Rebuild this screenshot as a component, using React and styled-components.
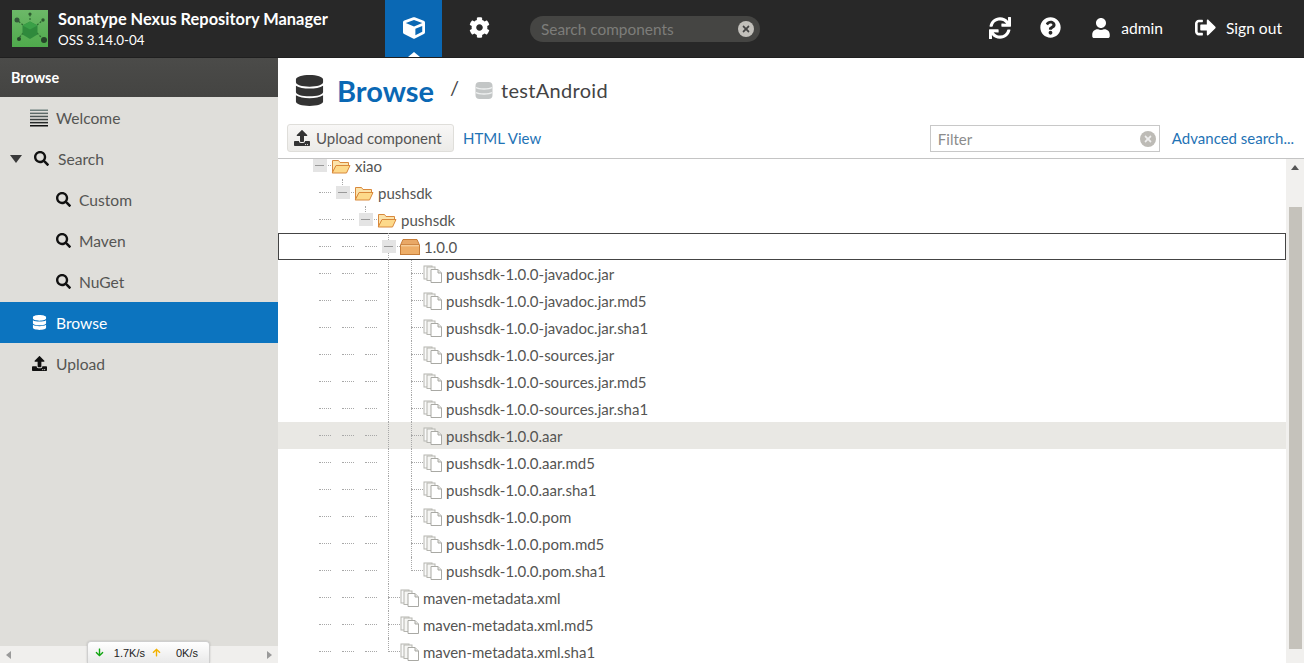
import React from "react";
import styled, { createGlobalStyle } from "styled-components";
import {
  FaCube,
  FaCog,
  FaDatabase,
  FaQuestionCircle,
  FaSearch,
  FaSignOutAlt,
  FaSync,
  FaTimes,
  FaUpload,
  FaUser,
  FaArrowDown,
  FaArrowUp,
} from "react-icons/fa";

const GlobalStyle = createGlobalStyle`
  html, body {
    margin: 0;
    padding: 0;
    height: 100%;
    overflow: hidden;
    background: #fff;
    font-family: "Lato", "Open Sans", sans-serif;
  }
  #root { height: 100%; }
  * { box-sizing: border-box; }
`;

const Page = styled.div`
  width: 1304px;
  height: 663px;
  display: grid;
  grid-template-rows: 58px 1fr;
  grid-template-columns: 278px 1fr;
  overflow: hidden;
`;

/* header */
const Header = styled.header`
  grid-column: 1 / 3;
  background: #282828;
  display: flex;
  align-items: stretch;
  color: #fff;
  border-bottom: 1px solid #1f1f1f;
`;

const Brand = styled.div`
  width: 385px;
  display: flex;
  align-items: center;
  padding-left: 12px;
  gap: 10px;
`;

const BrandText = styled.div`
  display: flex;
  flex-direction: column;
  gap: 3px;
`;

const BrandTitle = styled.div`
  font-size: 16.4px;
  font-weight: 700;
  line-height: 20px;
  white-space: nowrap;
`;

const BrandVersion = styled.div`
  font-size: 13.4px;
  line-height: 16px;
`;

const ModeTab = styled.div`
  position: relative;
  width: 57px;
  display: flex;
  align-items: center;
  justify-content: center;
  font-size: 22px;
  background: ${(props) => (props.active ? "#0a68b4" : "transparent")};
  padding-bottom: 2px;
  &:after {
    content: "";
    display: ${(props) => (props.active ? "block" : "none")};
    position: absolute;
    bottom: 0;
    left: 23px;
    border-left: 6px solid transparent;
    border-right: 6px solid transparent;
    border-bottom: 5px solid #fff;
  }
`;

const GearTab = styled(ModeTab)`
  margin-left: 9px;
  font-size: 21px;
`;

const SearchBox = styled.div`
  align-self: center;
  margin-left: 22px;
  width: 230px;
  height: 26px;
  border-radius: 13px;
  background: #454543;
  display: flex;
  align-items: center;
  justify-content: space-between;
  padding: 0 6px 0 11px;
  color: #7d7d7a;
  font-size: 15.4px;
`;

const ClearIcon = styled.span`
  width: ${(props) => props.size || 16}px;
  height: ${(props) => props.size || 16}px;
  border-radius: 50%;
  background: ${(props) => props.bg || "#c2c0bb"};
  color: ${(props) => props.fg || "#444"};
  display: inline-flex;
  align-items: center;
  justify-content: center;
  font-size: 10px;
`;

const HeaderActions = styled.div`
  margin-left: auto;
  display: flex;
  align-items: center;
  padding-right: 22px;
  padding-bottom: 2px;
  font-size: 15.6px;
`;

const HeaderIcon = styled.span`
  display: inline-flex;
  font-size: ${(props) => props.size || 21}px;
  margin-left: ${(props) => props.left || 0}px;
  margin-right: ${(props) => props.right || 0}px;
`;

/* sidebar */
const Sidebar = styled.aside`
  position: relative;
  background: #dfdeda;
  display: flex;
  flex-direction: column;
`;

const SidebarTitle = styled.div`
  height: 39px;
  background: linear-gradient(#4b4b49, #444442);
  color: #fff;
  font-size: 14.4px;
  font-weight: 700;
  display: flex;
  align-items: center;
  padding-left: 11px;
`;

const NavList = styled.nav`
  flex: 1;
`;

const NavItem = styled.div`
  height: 41px;
  margin-top: ${(props) => props.shift || 0}px;
  display: flex;
  align-items: center;
  padding-left: ${(props) => props.indent}px;
  font-size: 15.6px;
  color: ${(props) => (props.active ? "#fff" : "#555553")};
  background: ${(props) => (props.active ? "#0c74bf" : "transparent")};
`;

const NavIcon = styled.span`
  display: inline-flex;
  justify-content: center;
  width: ${(props) => props.width || 16}px;
  margin-right: ${(props) => props.gap || 9}px;
  font-size: 15px;
  color: ${(props) => props.color || "#111"};
`;

const Caret = styled.span`
  width: 0;
  height: 0;
  border-left: 6px solid transparent;
  border-right: 6px solid transparent;
  border-top: 8px solid #3a3a3a;
  margin-right: 11px;
`;

const HScroll = styled.div`
  height: 17px;
  background: #f0efed;
  display: flex;
  align-items: center;
  justify-content: space-between;
  padding: 0 6px;
`;

const ScrollArrow = styled.span`
  width: 0;
  height: 0;
  border-top: 4px solid transparent;
  border-bottom: 4px solid transparent;
  border-left: ${(props) => (props.dir === "right" ? "5px solid #9a9a9a" : "none")};
  border-right: ${(props) => (props.dir === "left" ? "5px solid #9a9a9a" : "none")};
`;

const SpeedPill = styled.div`
  position: absolute;
  left: 87px;
  bottom: 0;
  width: 123px;
  height: 22px;
  border-radius: 4px 4px 0 0;
  background: linear-gradient(#ffffff, #e9e9e9);
  border: 1px solid #cfcfcf;
  border-bottom: 0;
  box-shadow: 0 0 2px rgba(0, 0, 0, 0.2);
  display: flex;
  align-items: center;
  font-family: "Liberation Sans", sans-serif;
  font-size: 11px;
  color: #222;
  padding-left: 7px;
`;

const SpeedValue = styled.span`
  width: ${(props) => props.width}px;
  text-align: right;
`;

const SpeedArrow = styled.span`
  display: inline-flex;
  font-size: 9px;
  color: ${(props) => props.color};
`;

/* main panel */
const Main = styled.main`
  display: flex;
  flex-direction: column;
  min-width: 0;
  min-height: 0;
`;

const TitleRow = styled.div`
  height: 62px;
  display: flex;
  align-items: center;
  padding-left: 16px;
  padding-top: 2px;
`;

const TitleIcon = styled.span`
  display: inline-flex;
  font-size: 31px;
  color: #333;
  margin-right: 12px;
`;

const Title = styled.h1`
  margin: 0;
  font-size: 29px;
  font-weight: 700;
  color: #0a68b4;
`;

const Slash = styled.span`
  color: #444;
  font-size: 20px;
  margin: 0 16px;
  padding-bottom: 6px;
`;

const RepoName = styled.span`
  font-size: 20px;
  color: #444;
  margin-left: 8px;
  letter-spacing: 0.3px;
`;

const Toolbar = styled.div`
  height: 39px;
  display: flex;
  align-items: flex-start;
  padding: 4px 10px 0 9px;
  border-bottom: 1px solid #c4c4c4;
  flex-shrink: 0;
`;

const ToolButton = styled.div`
  width: 167px;
  height: 28px;
  display: flex;
  align-items: center;
  gap: 6px;
  padding-left: 6px;
  border: 1px solid #dfdeda;
  border-radius: 3px;
  background: linear-gradient(#f8f7f6, #ecebe8);
  font-size: 15px;
  color: #555;
`;

const ToolLink = styled.a`
  font-size: 15px;
  color: #1f73b5;
  line-height: 28px;
  margin-left: ${(props) => props.left || 0}px;
  white-space: nowrap;
`;

const FilterBox = styled.div`
  margin-left: auto;
  margin-top: 1px;
  width: 230px;
  height: 27px;
  border: 1px solid #c8c8c8;
  border-right-width: 1px;
  display: flex;
  align-items: center;
  justify-content: space-between;
  padding: 0 3px 0 7px;
  font-size: 15px;
  color: #8c8c8c;
  background: #fff;
`;

const TreePanel = styled.div`
  flex: 1;
  min-height: 0;
  display: flex;
  overflow: hidden;
`;

const TreeBody = styled.div`
  flex: 1;
  min-width: 0;
  overflow: hidden;
`;

const TreeList = styled.div`
  margin-top: -7px;
`;

const Row = styled.div`
  height: 27px;
  display: flex;
  align-items: center;
  padding-left: 30px;
  font-size: 15px;
  color: #555553;
  white-space: nowrap;
  background: ${(props) => (props.hover ? "#e9e8e4" : "transparent")};
  outline: ${(props) => (props.selected ? "1px solid #444" : "none")};
  outline-offset: -1px;
`;

const Cell = styled.span`
  position: relative;
  width: 23px;
  height: 27px;
  flex-shrink: 0;
  &:before {
    content: "";
    display: ${(props) => (props.kind === "blank" ? "none" : "block")};
    position: absolute;
    left: 11px;
    top: 0;
    height: ${(props) => (props.kind === "last" || props.kind === "top" ? "14px" : "27px")};
    border-left: 1px dotted #a8a8a8;
  }
  &:after {
    content: "";
    display: ${(props) => (props.kind === "line" ? "none" : "block")};
    position: absolute;
    left: 11px;
    right: 0;
    top: 13px;
    border-top: 1px dotted #a8a8a8;
  }
`;

const Toggle = styled.span`
  position: absolute;
  z-index: 1;
  left: 5px;
  top: 7px;
  width: 14px;
  height: 13px;
  background: #e4e4e4;
  &:after {
    content: "";
    position: absolute;
    left: 2px;
    right: 3px;
    top: 6px;
    height: 1px;
    background: #999;
  }
`;

const NodeIcon = styled.svg`
  width: 20px;
  height: 20px;
  flex-shrink: 0;
  margin-right: ${(props) => props.gap || 3}px;
`;

const VScroll = styled.div`
  width: 18px;
  flex-shrink: 0;
  background: #f1f0ee;
  display: flex;
  flex-direction: column;
  align-items: center;
  padding-top: 6px;
`;

const UpArrow = styled.span`
  border-left: 4px solid transparent;
  border-right: 4px solid transparent;
  border-bottom: 5px solid #555;
`;

const VThumb = styled.div`
  width: 13px;
  height: 442px;
  margin-top: 37px;
  background: #c5c2bb;
`;

const FolderIcon = () => (
  <NodeIcon viewBox="0 0 20 20" gap={4}>
    <path d="M1.5 4.5h6l1.5 2h8.5v3H5.5l-4 7z" fill="#fbe3ab" stroke="#d9893c" />
    <path d="M5 9.5h14l-3.5 7.5H1.2z" fill="#fdd98a" stroke="#d9893c" />
  </NodeIcon>
);

const ComponentIcon = () => (
  <NodeIcon viewBox="0 0 20 20" gap={4}>
    <path d="M3 2.5h14l2 4.5v1H1V7z" fill="#e9a866" stroke="#c77e3a" />
    <rect x="0.5" y="8" width="19" height="9.5" fill="#eeae68" stroke="#c77e3a" />
    <rect x="1" y="8" width="18" height="1.4" fill="#f6cd98" />
  </NodeIcon>
);

const FileIcon = () => (
  <NodeIcon viewBox="0 0 20 20" gap={3}>
    <rect x="1" y="2" width="8" height="13" fill="#fafafa" stroke="#b5b5b0" />
    <rect x="4" y="3" width="8" height="13.5" fill="#f6f6f4" stroke="#b5b5b0" />
    <path d="M8 5.5h7l3.5 3.5v9.5H8z" fill="#fff" stroke="#a9a9a4" />
    <path d="M15 5.5V9h3.5" fill="#e4e4e0" stroke="#a9a9a4" />
  </NodeIcon>
);

const LinesIcon = () => (
  <svg width="18" height="18" viewBox="0 0 18 18">
    {[0, 1, 2, 3, 4, 5].map((i) => (
      <rect
        key={i}
        x="0"
        y={i * 3.1 + 0.5}
        width="18"
        height="1.5"
        fill={["#6d7f7c", "#5c6a68", "#4c5655", "#3a4140", "#262a29", "#111"][i]}
      />
    ))}
  </svg>
);

const Logo = () => (
  <svg width="36" height="37" viewBox="0 0 36 37">
    <defs>
      <linearGradient id="logoBg" x1="0" y1="0" x2="0" y2="1">
        <stop offset="0" stopColor="#6cb868" />
        <stop offset="1" stopColor="#4faa4c" />
      </linearGradient>
    </defs>
    <rect width="36" height="37" fill="url(#logoBg)" />
    <g stroke="#2f6a33" strokeWidth="1.2" strokeDasharray="2 1.5">
      <path d="M18 10V5M11 15L6 11M25 15L30 11M11 23L7 28M25 23L30 28" />
    </g>
    <circle cx="18" cy="4" r="1.6" fill="#2d5a30" />
    <circle cx="5" cy="10" r="2.5" fill="#33593a" />
    <circle cx="31" cy="10" r="1.7" fill="#2d5a30" />
    <circle cx="7" cy="29" r="2" fill="#26452a" />
    <circle cx="32" cy="30" r="3" fill="#26452a" />
    <path d="M18 11.5l7.5 4v9L18 29l-7.5-4.5v-9z" fill="#2f8a3c" />
    <path d="M18 11.5l7.5 4-7.5 4-7.5-4z" fill="#3aa047" />
  </svg>
);

const NAV = [
  { label: "Welcome", indent: 30, icon: <LinesIcon />, width: 18, gap: 8 },
  { label: "Search", indent: 10, caret: true, icon: <FaSearch />, gap: 9 },
  { label: "Custom", indent: 55, icon: <FaSearch />, gap: 8 },
  { label: "Maven", indent: 55, icon: <FaSearch />, gap: 8 },
  { label: "NuGet", indent: 55, icon: <FaSearch />, gap: 8 },
  { label: "Browse", indent: 31, icon: <FaDatabase />, gap: 9, active: true },
  { label: "Upload", indent: 31, icon: <FaUpload />, gap: 9 },
];

// guides: one entry per indent level, the last one is the elbow
const TREE = [
  { name: "xiao", guides: ["top"], icon: "folder" },
  { name: "pushsdk", guides: ["blank", "top"], icon: "folder" },
  { name: "pushsdk", guides: ["blank", "blank", "top"], icon: "folder" },
  { name: "1.0.0", guides: ["blank", "blank", "blank", "mid"], icon: "component", selected: true },
  ...[
    "pushsdk-1.0.0-javadoc.jar",
    "pushsdk-1.0.0-javadoc.jar.md5",
    "pushsdk-1.0.0-javadoc.jar.sha1",
    "pushsdk-1.0.0-sources.jar",
    "pushsdk-1.0.0-sources.jar.md5",
    "pushsdk-1.0.0-sources.jar.sha1",
    "pushsdk-1.0.0.aar",
    "pushsdk-1.0.0.aar.md5",
    "pushsdk-1.0.0.aar.sha1",
    "pushsdk-1.0.0.pom",
    "pushsdk-1.0.0.pom.md5",
  ].map((name) => ({
    name,
    guides: ["blank", "blank", "blank", "line", "mid"],
    icon: "file",
    hover: name === "pushsdk-1.0.0.aar",
  })),
  { name: "pushsdk-1.0.0.pom.sha1", guides: ["blank", "blank", "blank", "line", "last"], icon: "file" },
  { name: "maven-metadata.xml", guides: ["blank", "blank", "blank", "mid"], icon: "file" },
  { name: "maven-metadata.xml.md5", guides: ["blank", "blank", "blank", "mid"], icon: "file" },
  { name: "maven-metadata.xml.sha1", guides: ["blank", "blank", "blank", "last"], icon: "file" },
];

const TreeIcon = ({ type }) => {
  if (type === "folder") return <FolderIcon />;
  if (type === "component") return <ComponentIcon />;
  return <FileIcon />;
};

const App = () => {
  return (
    <Page>
      <GlobalStyle />
      <Header>
        <Brand>
          <Logo />
          <BrandText>
            <BrandTitle>Sonatype Nexus Repository Manager</BrandTitle>
            <BrandVersion>OSS 3.14.0-04</BrandVersion>
          </BrandText>
        </Brand>
        <ModeTab active>
          <FaCube />
        </ModeTab>
        <GearTab>
          <FaCog />
        </GearTab>
        <SearchBox>
          Search components
          <ClearIcon>
            <FaTimes />
          </ClearIcon>
        </SearchBox>
        <HeaderActions>
          <HeaderIcon size={22} right={29}>
            <FaSync />
          </HeaderIcon>
          <HeaderIcon size={21} right={30}>
            <FaQuestionCircle />
          </HeaderIcon>
          <HeaderIcon size={20} right={10}>
            <FaUser />
          </HeaderIcon>
          admin
          <HeaderIcon size={21} left={32} right={10}>
            <FaSignOutAlt />
          </HeaderIcon>
          Sign out
        </HeaderActions>
      </Header>

      <Sidebar>
        <SidebarTitle>Browse</SidebarTitle>
        <NavList>
          {NAV.map((item) => (
            <NavItem key={item.label} indent={item.indent} active={item.active}>
              {item.caret && <Caret />}
              <NavIcon width={item.width} gap={item.gap} color={item.active ? "#fff" : "#111"}>
                {item.icon}
              </NavIcon>
              {item.label}
            </NavItem>
          ))}
        </NavList>
        <HScroll>
          <ScrollArrow dir="left" />
          <ScrollArrow dir="right" />
        </HScroll>
        <SpeedPill>
          <SpeedArrow color="#12a512">
            <FaArrowDown />
          </SpeedArrow>
          <SpeedValue width={41}>1.7K/s</SpeedValue>
          <SpeedArrow color="#f2b200" style={{ marginLeft: 7 }}>
            <FaArrowUp />
          </SpeedArrow>
          <SpeedValue width={37}>0K/s</SpeedValue>
        </SpeedPill>
      </Sidebar>

      <Main>
        <TitleRow>
          <TitleIcon>
            <FaDatabase />
          </TitleIcon>
          <Title>Browse</Title>
          <Slash>/</Slash>
          <svg width="18" height="19" viewBox="0 0 18 19">
            <rect x="0.5" y="1" width="17" height="17" rx="4" fill="#c3c6c6" />
            <path d="M1 6.5c3 2 13 2 16 0M1 11.5c3 2 13 2 16 0" stroke="#eef0f0" strokeWidth="1.4" fill="none" />
          </svg>
          <RepoName>testAndroid</RepoName>
        </TitleRow>
        <Toolbar>
          <ToolButton>
            <FaUpload size={16} color="#333" />
            Upload component
          </ToolButton>
          <ToolLink left={9}>HTML View</ToolLink>
          <FilterBox>
            Filter
            <ClearIcon bg="#bdbbb6" fg="#eee">
              <FaTimes />
            </ClearIcon>
          </FilterBox>
          <ToolLink left={12}>Advanced search...</ToolLink>
        </Toolbar>
        <TreePanel>
          <TreeBody>
            <TreeList>
              {TREE.map((node, i) => (
                <Row key={i} hover={node.hover} selected={node.selected}>
                  {node.guides.map((kind, j) => (
                    <Cell key={j} kind={kind}>
                      {j === node.guides.length - 1 && node.icon !== "file" && <Toggle />}
                    </Cell>
                  ))}
                  <TreeIcon type={node.icon} />
                  {node.name}
                </Row>
              ))}
            </TreeList>
          </TreeBody>
          <VScroll>
            <UpArrow />
            <VThumb />
          </VScroll>
        </TreePanel>
      </Main>
    </Page>
  );
};

export default App;
